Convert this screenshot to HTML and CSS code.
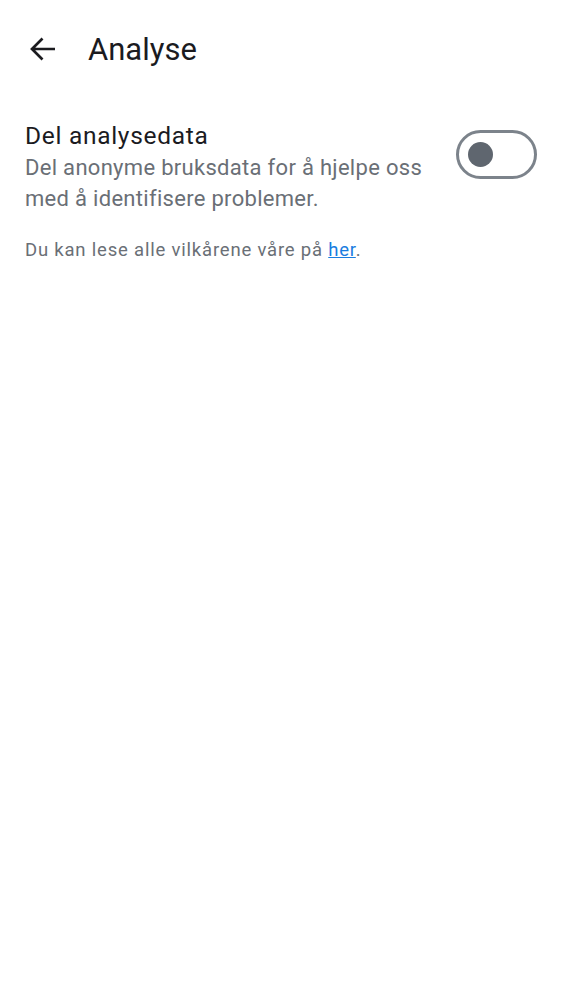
FILE: index.html
```html
<!DOCTYPE html>
<html lang="no">
<head>
<meta charset="utf-8">
<link rel="stylesheet" href="styles.css">
</head>
<body>
<header class="bar">
  <svg class="back" viewBox="0 0 26 24" width="26" height="24"><path d="M26 12H3M13.5 1.5L3 12l10.5 10.5" fill="none" stroke="#1b1b1f" stroke-width="2.7"/></svg>
  <h1 class="title">Analyse</h1>
</header>
<main class="content">
  <div class="row">
    <div class="texts">
      <div class="label">Del analysedata</div>
      <div class="desc">Del anonyme bruksdata for å hjelpe oss med å identifisere problemer.</div>
    </div>
    <div class="switch"><div class="thumb"></div></div>
  </div>
  <p class="note">Du kan lese alle vilkårene våre på <a href="#" class="link">her</a>.</p>
</main>
</body>
</html>
```
FILE: styles.css
```css
html, body { margin: 0; padding: 0; background: #fff; }
body { font-family: Roboto, "Noto Sans", sans-serif; color: #1b1b1f; width: 562px; }
.bar { display: flex; align-items: center; height: 98px; padding-left: 29px; box-sizing: border-box; }
.back { display: block; flex: none; }
.title { margin: 0 0 0 33px; font-size: 31px; font-weight: 400; line-height: 1; letter-spacing: 0; }
.content { padding: 22px 25px 0 25px; }
.row { display: flex; align-items: flex-start; justify-content: space-between; }
.texts { width: 410px; }
.label { font-size: 24.5px; line-height: 32px; letter-spacing: 0.7px; }
.desc { font-size: 22px; line-height: 31px; color: #6a6f76; letter-spacing: 0.3px; }
.switch { flex: none; width: 66px; height: 43px; border: 3px solid #7c838b; border-radius: 25px; margin-top: 10px; display: flex; align-items: center; padding-left: 9px; }
.thumb { width: 25px; height: 25px; border-radius: 50%; background: #5f666f; }
.note { margin: 24px 0 0 0; font-size: 18.5px; line-height: 24px; color: #6a6f76; letter-spacing: 0.8px; }
.link { color: #1a7de0; text-decoration: underline; }
```
